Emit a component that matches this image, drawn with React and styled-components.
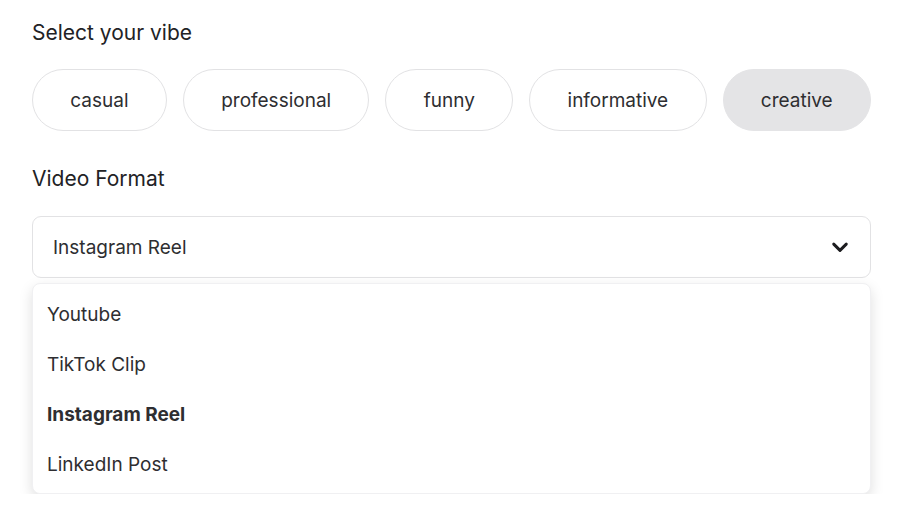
import React, { useState } from 'react'
import styled, { createGlobalStyle } from 'styled-components'

const GlobalStyle = createGlobalStyle`
  html, body {
    margin: 0;
    padding: 0;
    background: #ffffff;
  }
  body {
    font-family: Inter, "Noto Sans", sans-serif;
    color: #2b2b2e;
  }
`

const Page = styled.div`
  padding: 18px 32px 0 32px;
  display: flex;
  flex-direction: column;
`

const Label = styled.h2`
  margin: 0;
  font-size: 21px;
  font-weight: 400;
  line-height: 30px;
  color: #222225;
`

const VibeRow = styled.div`
  display: flex;
  gap: 16px;
  margin-top: 21px;
  margin-bottom: 33px;
`

const Pill = styled.button`
  flex: 1 1 auto;
  height: 62px;
  padding: 0 34px;
  border-radius: 31px;
  border: 1px solid ${p => (p.active ? '#e4e4e6' : '#e2e2e4')};
  background: ${p => (p.active ? '#e4e4e6' : '#ffffff')};
  font-family: inherit;
  font-size: 19px;
  color: #2e2e31;
  cursor: pointer;
`

const SelectBox = styled.div`
  margin-top: 22px;
  height: 60px;
  border: 1px solid #e2e2e4;
  border-radius: 9px;
  display: flex;
  align-items: center;
  justify-content: space-between;
  padding: 0 20px 0 20px;
  font-size: 19px;
  color: #2e2e31;
`

const Menu = styled.ul`
  list-style: none;
  margin: 5px 0 0 0;
  padding: 5px 0 4px 0;
  border-radius: 8px;
  border: 1px solid #f0f0f2;
  box-shadow: 0 5px 14px rgba(0, 0, 0, 0.13);
  background: #ffffff;
`

const Option = styled.li`
  height: 50px;
  display: flex;
  align-items: center;
  padding: 0 14px;
  font-size: 19px;
  font-weight: ${p => (p.selected ? 700 : 400)};
  color: #2e2e31;
`

const Chevron = () => (
  <svg width="20" height="20" viewBox="0 0 24 24" fill="none" stroke="#1c1c1f" strokeWidth="3.6" strokeLinecap="round" strokeLinejoin="round">
    <path d="M4.5 8.5l7.5 7.5 7.5-7.5" />
  </svg>
)

const vibes = ['casual', 'professional', 'funny', 'informative', 'creative']
const formats = ['Youtube', 'TikTok Clip', 'Instagram Reel', 'LinkedIn Post']

export default function App() {
  const [vibe, setVibe] = useState('creative')
  const [format, setFormat] = useState('Instagram Reel')

  return (
    <Page>
      <GlobalStyle />
      <Label>Select your vibe</Label>
      <VibeRow>
        {vibes.map(v => (
          <Pill key={v} active={v === vibe} onClick={() => setVibe(v)}>
            {v}
          </Pill>
        ))}
      </VibeRow>
      <Label>Video Format</Label>
      <SelectBox>
        <span>{format}</span>
        <Chevron />
      </SelectBox>
      <Menu>
        {formats.map(f => (
          <Option key={f} selected={f === format} onClick={() => setFormat(f)}>
            {f}
          </Option>
        ))}
      </Menu>
    </Page>
  )
}
